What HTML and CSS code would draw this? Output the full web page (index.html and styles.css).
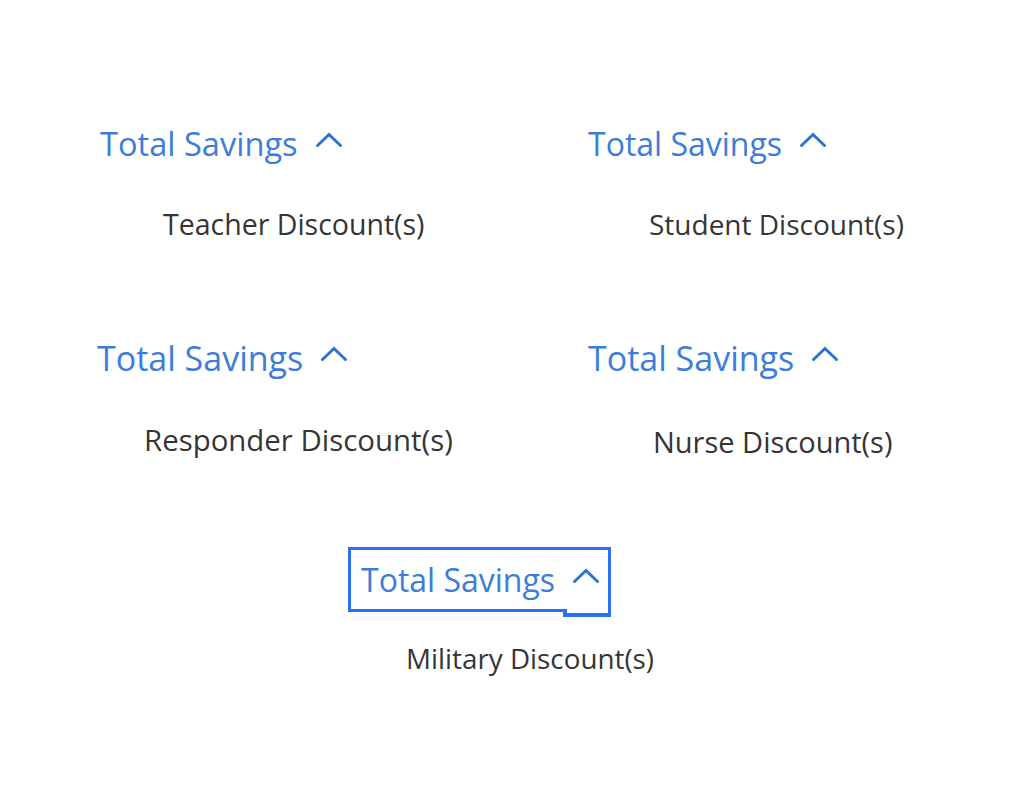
FILE: index.html
```html
<!DOCTYPE html>
<html lang="en">
<head>
<meta charset="utf-8">
<title>Total Savings</title>
<link rel="stylesheet" href="styles.css">
</head>
<body>
<main class="savings-grid">
  <section class="card card--teacher">
    <div class="card-head">
      <button class="toggle" type="button">Total Savings
        <svg class="chevron" width="28" height="16" viewBox="0 0 28 16" aria-hidden="true"><path d="M2.5 13.5 L14 2.5 L25.5 13.5"/></svg>
      </button>
    </div>
    <p class="card-sub">Teacher Discount(s)</p>
  </section>
  <section class="card card--student">
    <div class="card-head">
      <button class="toggle" type="button">Total Savings
        <svg class="chevron" width="28" height="16" viewBox="0 0 28 16" aria-hidden="true"><path d="M2.5 13.5 L14 2.5 L25.5 13.5"/></svg>
      </button>
    </div>
    <p class="card-sub">Student Discount(s)</p>
  </section>
  <section class="card card--responder">
    <div class="card-head">
      <button class="toggle" type="button">Total Savings
        <svg class="chevron" width="28" height="16" viewBox="0 0 28 16" aria-hidden="true"><path d="M2.5 13.5 L14 2.5 L25.5 13.5"/></svg>
      </button>
    </div>
    <p class="card-sub">Responder Discount(s)</p>
  </section>
  <section class="card card--nurse">
    <div class="card-head">
      <button class="toggle" type="button">Total Savings
        <svg class="chevron" width="28" height="16" viewBox="0 0 28 16" aria-hidden="true"><path d="M2.5 13.5 L14 2.5 L25.5 13.5"/></svg>
      </button>
    </div>
    <p class="card-sub">Nurse Discount(s)</p>
  </section>
  <section class="card card--military">
    <div class="card-head">
      <button class="toggle toggle--focused" type="button">Total Savings
        <svg class="chevron" width="28" height="16" viewBox="0 0 28 16" aria-hidden="true"><path d="M2.5 13.5 L14 2.5 L25.5 13.5"/></svg>
      </button>
    </div>
    <p class="card-sub">Military Discount(s)</p>
  </section>
</main>
</body>
</html>
```

FILE: styles.css
```css
html, body {
  margin: 0;
  padding: 0;
  background: #ffffff;
}

body {
  font-family: "Open Sans", "Noto Sans", "Liberation Sans", sans-serif;
  width: 1026px;
  height: 798px;
  overflow: hidden;
}

.savings-grid {
  display: grid;
  grid-template-columns: 480px 480px;
  row-gap: 82px;
  padding: 111px 0 0 56px;
}

.card {
  --indent: 44px;
  --sub-indent: 106px;
  --head-size: 33px;
  --sub-size: 28.5px;
  --sub-gap: 30px;
  display: flex;
  flex-direction: column;
  align-items: flex-start;
}

.card--teacher   { --indent: 44px;  --sub-indent: 107px; --head-size: 32.6px; --sub-size: 28.5px; --sub-gap: 29px; }
.card--student   { --indent: 52px;  --sub-indent: 113px; --head-size: 32px;   --sub-size: 28px;   --sub-gap: 29px; }
.card--responder { --indent: 41px;  --sub-indent: 88px;  --head-size: 34px;   --sub-size: 29.4px; --sub-gap: 31px; }
.card--nurse     { --indent: 52px;  --sub-indent: 117px; --head-size: 34px;   --sub-size: 29px;   --sub-gap: 33px; }
.card--military  {
  --indent: 305px;
  --sub-indent: 350px;
  --head-size: 32px;
  --sub-size: 27.8px;
  --sub-gap: 27px;
  grid-column: 1 / -1;
  margin-top: 4px;
}

.card-head {
  display: flex;
  padding-left: var(--indent);
}

.toggle {
  position: relative;
  display: inline-flex;
  align-items: center;
  gap: 17px;
  margin: 0 0 0 -13px;
  padding: 8px 8px 7px 10px;
  border: 3px solid transparent;
  background: none;
  font-family: inherit;
  font-size: var(--head-size);
  line-height: 44px;
  color: #3b7dd8;
  cursor: pointer;
  white-space: nowrap;
}

.chevron {
  flex: none;
  margin-bottom: 8px;
}

.chevron path {
  fill: none;
  stroke: #2f72d2;
  stroke-width: 3;
  stroke-linecap: round;
  stroke-linejoin: miter;
}

.toggle--focused {
  border-color: #2b6ff2;
}

.toggle--focused::after {
  content: "";
  position: absolute;
  right: -3px;
  bottom: -8px;
  width: 48px;
  height: 8px;
  box-sizing: border-box;
  background: #ffffff;
  border-style: solid;
  border-color: #2b6ff2;
  border-width: 0 3px 4px 4px;
}

.card-sub {
  margin: var(--sub-gap) 0 0 0;
  padding-left: var(--sub-indent);
  font-size: var(--sub-size);
  line-height: 38px;
  color: #353535;
  white-space: nowrap;
}
```
